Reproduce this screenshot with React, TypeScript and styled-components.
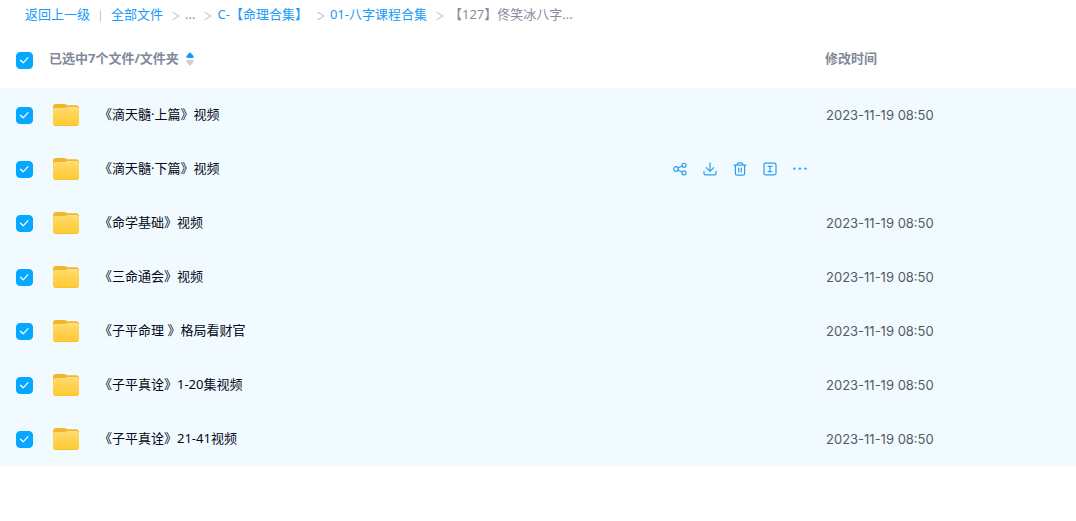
import React, { useState } from "react";
import styled, { createGlobalStyle } from "styled-components";

const GlobalStyle = createGlobalStyle`
  body {
    margin: 0;
    background: #fff;
    font: 13px/20px "Noto Sans", "Noto Sans CJK SC", sans-serif;
    color: #03081a;
  }
`;

const Breadcrumb = styled.nav`
  display: flex;
  align-items: center;
  height: 28px;
  padding-left: 25px;
  white-space: nowrap;
`;

const Crumb = styled.a`
  color: #1b9bf5;
  text-decoration: none;
`;

const PlainCrumb = styled.span`
  color: #878c9c;
`;

const Divider = styled.span`
  width: 1px;
  height: 12px;
  margin: 4px 10px 0;
  background: #c4c8d6;
`;

const Chevron = styled.svg`
  flex: none;
  margin: 4px 5px 0 9px;
  stroke: #c0c6dc;
`;

const FileTable = styled.table`
  width: 100%;
  table-layout: fixed;
  border-collapse: collapse;
`;

const Column = styled.col<{ $width?: string }>`
  width: ${(p) => p.$width ?? "auto"};
`;

const HeadRow = styled.tr`
  height: 60px;
`;

const HeadCell = styled.th`
  padding: 0;
  text-align: left;
  font-weight: 700;
  color: #818999;
`;

const CheckHeadCell = styled.th`
  padding: 4px 0 0 16px;
`;

const SortButton = styled.button`
  display: flex;
  align-items: center;
  gap: 7px;
  padding: 0;
  border: 0;
  background: none;
  font: inherit;
  color: inherit;
  cursor: pointer;

  > svg {
    margin-top: 2px;
  }
`;

const Row = styled.tr<{ $selected: boolean }>`
  height: 54px;
  background: ${(p) => (p.$selected ? "#f1fafe" : "#fff")};
`;

const Cell = styled.td`
  padding: 0 0 2px;
`;

const CheckCell = styled.td`
  padding: 0 0 0 16px;
`;

const DateCell = styled.td`
  padding: 0 0 0 1px;
  font-family: Inter, sans-serif;
  color: #535a69;
`;

const CheckWrap = styled.span`
  display: grid;
  width: 17px;
  height: 17px;

  > * {
    grid-area: 1 / 1;
  }

  > svg {
    pointer-events: none;
  }
`;

const CheckInput = styled.input`
  appearance: none;
  width: 17px;
  height: 17px;
  margin: 0;
  box-sizing: border-box;
  border: 1px solid #c4c8d6;
  border-radius: 4px;

  &:checked {
    border-color: #06a7ff;
    background: #06a7ff;
  }
`;

const NameBox = styled.div`
  display: flex;
  align-items: center;
  padding-right: 17px;
`;

const FolderSvg = styled.svg`
  flex: none;
  margin: 2px 20px 0 4px;
`;

const FileName = styled.span`
  flex: 1;
  white-space: nowrap;
`;

const Actions = styled.div`
  display: flex;
  gap: 14px;
  padding-top: 2px;
`;

const ActionButton = styled.button`
  display: block;
  width: 16px;
  height: 16px;
  padding: 0;
  border: 0;
  background: none;
  color: #2b9ff2;
  cursor: pointer;

  > svg {
    display: block;
  }
`;

function Check({ label, checked, onChange }: { label: string; checked: boolean; onChange: () => void }) {
  return (
    <CheckWrap>
      <CheckInput type="checkbox" aria-label={label} checked={checked} onChange={onChange} />
      <svg width="17" height="17" viewBox="0 0 17 17" fill="none" stroke="#fff" strokeWidth="1.2" strokeLinecap="round" strokeLinejoin="round">
        <path d="M4.5 8.2 L7.2 10.8 L12 5.6" />
      </svg>
    </CheckWrap>
  );
}

function Separator() {
  return (
    <Chevron width="8" height="10" viewBox="0 0 8 10" fill="none" strokeWidth="1.2">
      <path d="M0.7 1.2 L7 5 L0.7 8.8" />
    </Chevron>
  );
}

function Folder() {
  return (
    <FolderSvg width="26" height="22" viewBox="0 0 26 22" aria-hidden="true">
      <defs>
        <linearGradient id="folderFront" x1="0" y1="0" x2="0" y2="1">
          <stop offset="0" stopColor="#ffdf80" />
          <stop offset="0.25" stopColor="#ffd65c" />
          <stop offset="1" stopColor="#ffca32" />
        </linearGradient>
      </defs>
      <path d="M0 3 Q0 0 3 0 H11 Q12.5 0 13.5 0.9 L14.5 1.3 H23 Q26 1.3 26 4.3 V15 H0Z" fill="#f3b52b" />
      <path d="M0 6 Q0 4 2.6 4 H12 L14.5 3 H23.4 Q26 3 26 5.6 V19 Q26 22 23 22 H3 Q0 22 0 19Z" fill="url(#folderFront)" />
      <path d="M1 20.4 Q1.7 21.6 3 21.6 H23 Q24.3 21.6 25 20.4" fill="none" stroke="#f9bd2b" strokeWidth="0.8" />
    </FolderSvg>
  );
}

const icons: { label: string; art: React.ReactNode }[] = [
  {
    label: "分享",
    art: (
      <>
        <circle cx="4" cy="8" r="2.3" />
        <circle cx="12" cy="4.3" r="2" />
        <circle cx="12" cy="11.8" r="2" />
        <path d="M6.2 7 L10.1 5 M6.2 9 L10.1 11" />
      </>
    ),
  },
  {
    label: "下载",
    art: <path d="M8 1.8 V10.2 M4.3 6.7 L8 10.4 L11.7 6.7 M2 10.3 V12.5 Q2 13.8 3.3 13.8 H12.7 Q14 13.8 14 12.5 V10.3" />,
  },
  {
    label: "删除",
    art: <path d="M2 4.2 H14 M5.3 4 V3 Q5.3 1.8 6.5 1.8 H9.5 Q10.7 1.8 10.7 3 V4 M3.4 4.3 V12.4 Q3.4 14.2 5.2 14.2 H10.8 Q12.6 14.2 12.6 12.4 V4.3 M6.7 7 V11 M9.3 7 V11" />,
  },
  {
    label: "重命名",
    art: (
      <>
        <rect x="2" y="2.2" width="12" height="11.6" rx="1.5" />
        <path d="M6.2 5.4 H9.8 M8 5.4 V10.6 M6.2 10.6 H9.8" />
      </>
    ),
  },
  {
    label: "更多",
    art: (
      <g fill="currentColor" stroke="none">
        <circle cx="2.3" cy="7.6" r="1.2" />
        <circle cx="7.9" cy="7.6" r="1.2" />
        <circle cx="13.5" cy="7.6" r="1.2" />
      </g>
    ),
  },
];

const files = [
  "《滴天髓·上篇》视频",
  "《滴天髓·下篇》视频",
  "《命学基础》视频",
  "《三命通会》视频",
  "《子平命理 》格局看财官",
  "《子平真诠》1-20集视频",
  "《子平真诠》21-41视频",
];

export default function App() {
  const [selected, setSelected] = useState<boolean[]>(files.map(() => true));
  const [active, setActive] = useState(1);
  const count = selected.filter(Boolean).length;
  const all = count === files.length;

  return (
    <>
      <GlobalStyle />
      <Breadcrumb>
        <Crumb href="#up">返回上一级</Crumb>
        <Divider />
        <Crumb href="#all">全部文件</Crumb>
        <Separator />
        <PlainCrumb>...</PlainCrumb>
        <Separator />
        <Crumb href="#c">C-【命理合集】</Crumb>
        <Separator />
        <Crumb href="#01">01-八字课程合集</Crumb>
        <Separator />
        <PlainCrumb>【127】佟笑冰八字...</PlainCrumb>
      </Breadcrumb>
      <FileTable>
        <colgroup>
          <Column $width="49px" />
          <Column />
          <Column $width="251px" />
        </colgroup>
        <thead>
          <HeadRow>
            <CheckHeadCell>
              <Check label="全选" checked={all} onChange={() => setSelected(files.map(() => !all))} />
            </CheckHeadCell>
            <HeadCell>
              <SortButton type="button">
                已选中{count}个文件/文件夹
                <svg width="8" height="14" viewBox="0 0 8 14">
                  <path d="M4 0.5 Q4.6 0.5 5 1 L7.6 4.2 Q8 6 6.8 6 H1.2 Q0 6 0.4 4.2 L3 1 Q3.4 0.5 4 0.5Z" fill="#1b9bf5" />
                  <path d="M4 13.5 Q4.6 13.5 5 13 L7.6 9.8 Q8 8 6.8 8 H1.2 Q0 8 0.4 9.8 L3 13 Q3.4 13.5 4 13.5Z" fill="#d0d1d8" />
                </svg>
              </SortButton>
            </HeadCell>
            <HeadCell>修改时间</HeadCell>
          </HeadRow>
        </thead>
        <tbody>
          {files.map((name, i) => (
            <Row key={name} $selected={selected[i]} onMouseEnter={() => setActive(i)}>
              <CheckCell>
                <Check
                  label={name}
                  checked={selected[i]}
                  onChange={() => setSelected(selected.map((s, j) => (j === i ? !s : s)))}
                />
              </CheckCell>
              <Cell>
                <NameBox>
                  <Folder />
                  <FileName>{name}</FileName>
                  {active === i && (
                    <Actions>
                      {icons.map((icon) => (
                        <ActionButton key={icon.label} type="button" aria-label={icon.label}>
                          <svg width="16" height="16" viewBox="0 0 16 16" fill="none" stroke="currentColor" strokeWidth="1.2" strokeLinecap="round" strokeLinejoin="round">
                            {icon.art}
                          </svg>
                        </ActionButton>
                      ))}
                    </Actions>
                  )}
                </NameBox>
              </Cell>
              <DateCell>{active === i ? "" : "2023-11-19 08:50"}</DateCell>
            </Row>
          ))}
        </tbody>
      </FileTable>
    </>
  );
}
